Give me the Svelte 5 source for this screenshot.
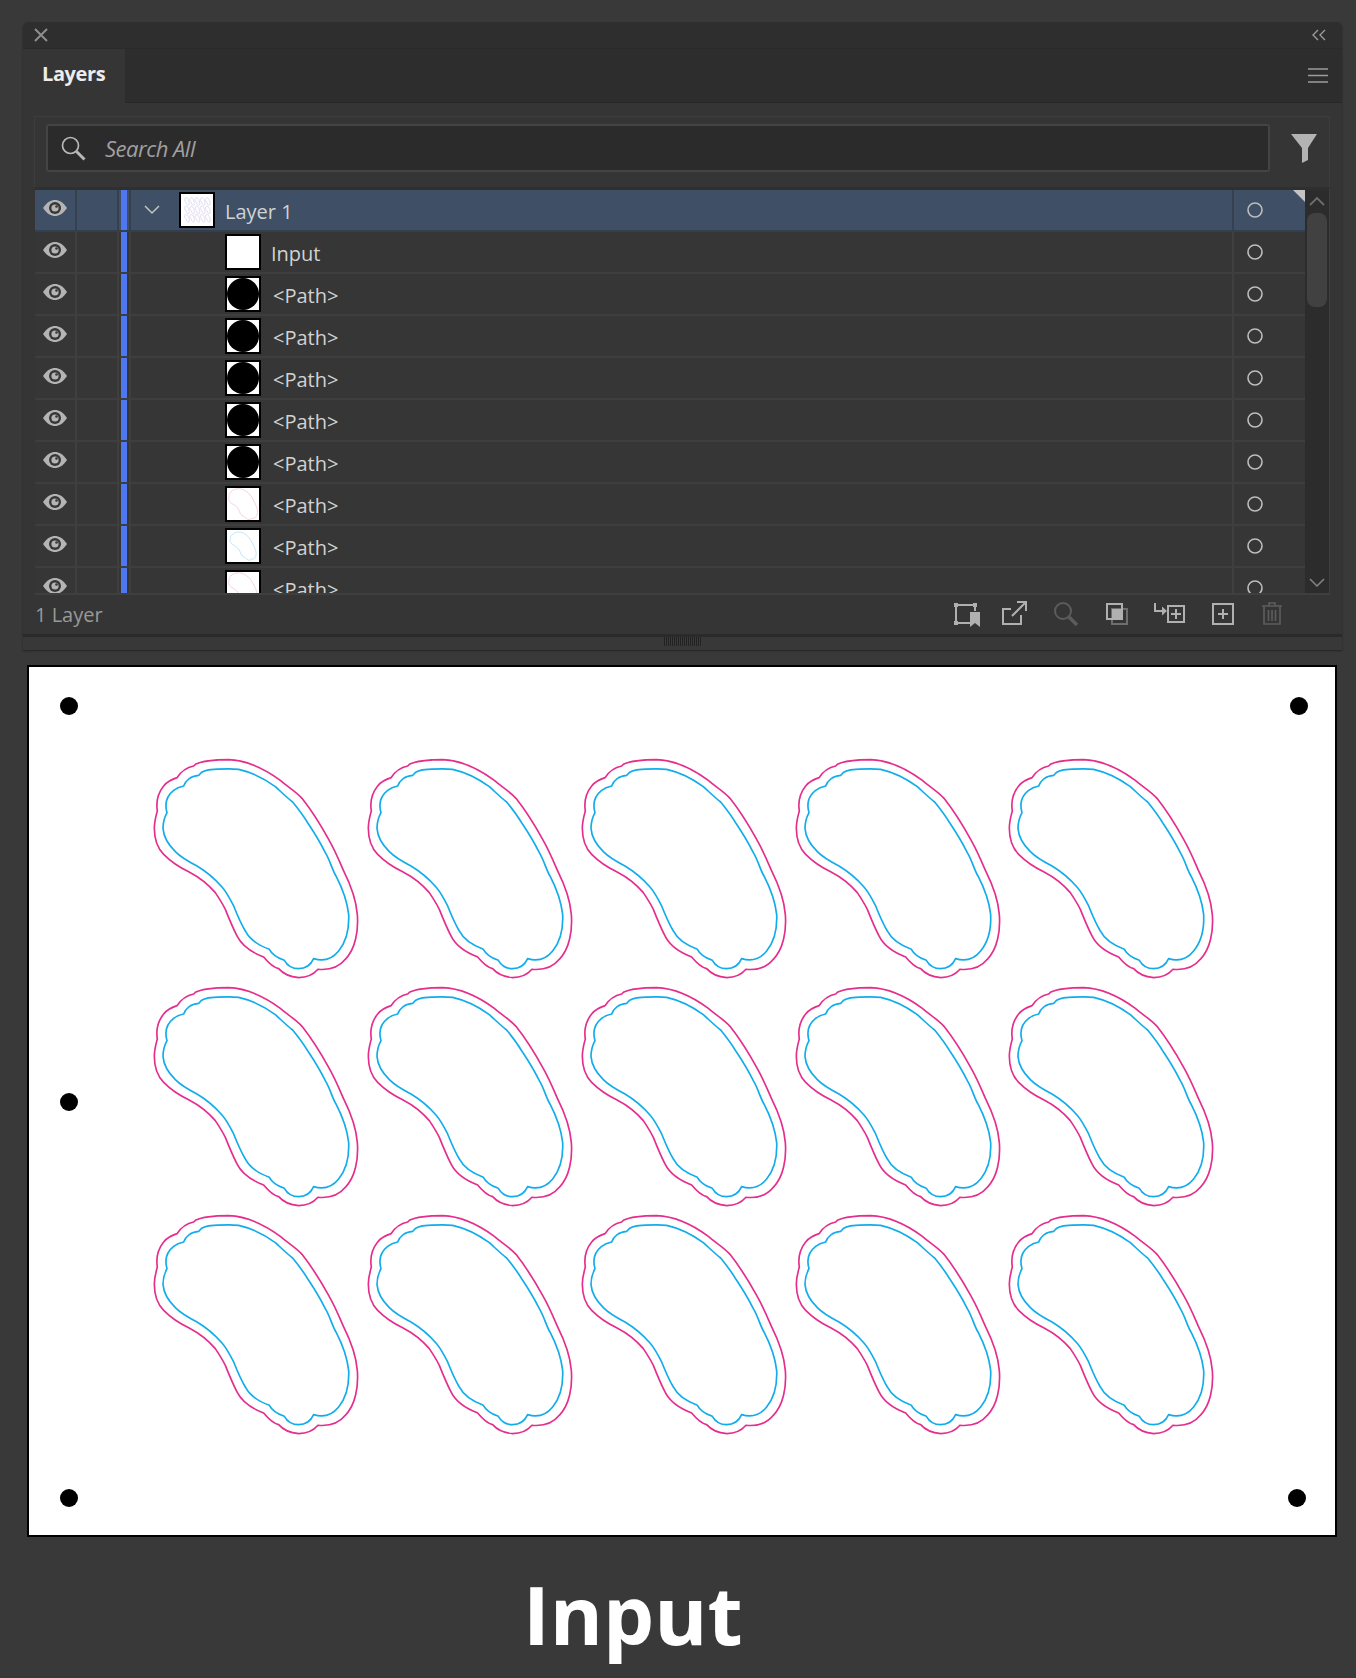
<script lang="ts">
	type Row = { label: string; thumb: 'white' | 'dot' | 'pink' | 'blue' };

	const pink =
		'M190 70C215 58 260 56 290 56C345 58 400 85 445 118C470 140 490 150 510 172C540 210 565 250 590 295C610 330 620 355 635 390C655 430 672 470 676 520C680 570 670 625 640 655C620 680 590 688 558 685C545 700 525 710 500 710C475 708 455 700 440 683C420 678 405 660 395 648C360 635 330 615 315 585C300 555 290 530 280 505C270 485 260 470 250 455C225 425 195 405 170 392C140 378 115 360 95 340C75 320 67 295 67 262C67 240 72 225 76 210C72 185 75 160 95 135C105 122 120 115 135 110C145 95 160 80 185 75Z';
	const blue =
		'M203 100C210 88 225 86 245 85C270 84 295 82 320 85C365 95 400 115 430 137C450 155 465 170 482 183C500 205 515 225 530 250C550 280 565 305 580 335C595 360 600 385 612 405C630 440 645 475 650 520C652 560 645 600 620 630C600 655 575 662 545 653C535 675 520 683 500 683C480 683 465 672 457 658C440 652 420 640 412 625C385 615 355 600 340 570C325 545 315 520 305 495C295 475 285 455 270 438C250 415 220 390 195 375C170 362 150 352 130 332C110 312 95 290 93 262C93 240 98 228 105 215C98 190 103 165 125 148C135 140 145 137 155 135C160 120 175 105 200 103Z';

	const rows: Row[] = [
		{ label: 'Input', thumb: 'white' },
		{ label: '<Path>', thumb: 'dot' },
		{ label: '<Path>', thumb: 'dot' },
		{ label: '<Path>', thumb: 'dot' },
		{ label: '<Path>', thumb: 'dot' },
		{ label: '<Path>', thumb: 'dot' },
		{ label: '<Path>', thumb: 'pink' },
		{ label: '<Path>', thumb: 'blue' },
		{ label: '<Path>', thumb: 'pink' }
	];

	const cols = [0, 214, 428, 642, 855];
	const lines = [0, 228, 456];
	const marks = [
		[40, 39],
		[1270, 39],
		[40, 435],
		[40, 831],
		[1268, 831]
	];
</script>

{#snippet eye()}
	<svg class="eye" width="26" height="18" viewBox="0 0 26 18">
		<path d="M1 9C5 3 9 1 13 1s8 2 12 8c-4 6-8 8-12 8S5 15 1 9Z" fill="#b4b4b4" />
		<circle cx="13" cy="9" r="6" fill="#363636" />
		<circle cx="13" cy="9" r="3.6" fill="#b4b4b4" />
		<circle cx="14.5" cy="7.5" r="1.3" fill="#363636" />
	</svg>
{/snippet}

{#snippet target()}
	<svg class="target" width="18" height="18" viewBox="0 0 18 18">
		<circle cx="9" cy="9" r="7" fill="none" stroke="#bdbdbd" stroke-width="1.6" />
	</svg>
{/snippet}

<main class="page">
	<section class="panel">
		<header class="titlebar">
			<svg width="14" height="14" viewBox="0 0 14 14">
				<path d="M1 1l12 12M13 1L1 13" stroke="#8e8e8e" stroke-width="2" />
			</svg>
			<svg width="14" height="12" viewBox="0 0 14 12">
				<path d="M6 1L1 6l5 5M13 1L8 6l5 5" fill="none" stroke="#9a9a9a" stroke-width="1.4" />
			</svg>
		</header>

		<div class="tabbar">
			<div class="tab">Layers</div>
			<svg width="20" height="15" viewBox="0 0 20 15">
				<path d="M0 1h20M0 7.500h20M0 14h20" stroke="#9c9c9c" stroke-width="1.500" />
			</svg>
		</div>

		<div class="searchbar">
			<div class="searchbox">
				<svg width="26" height="26" viewBox="0 0 26 26">
					<circle cx="10.500" cy="10.500" r="8" fill="none" stroke="#b8b8b8" stroke-width="1.700" />
					<path d="M16.500 16.500l8 8" stroke="#b8b8b8" stroke-width="3" />
				</svg>
				<span>Search All</span>
			</div>
			<svg class="filter" width="28" height="30" viewBox="0 0 28 30">
				<path d="M1 1h26L18 15v12l-6 3V15Z" fill="#b3b3b3" />
			</svg>
		</div>

		<div class="list">
			<div class="rows">
				<div class="row selected">
					<div class="cell">{@render eye()}</div>
					<div class="cell"></div>
					<div class="cell bar"><i></i></div>
					<div class="cell name">
						<svg class="chevron" width="16" height="10" viewBox="0 0 16 10">
							<path d="M1 1l7 7 7-7" fill="none" stroke="#c4c4c4" stroke-width="1.500" />
						</svg>
						<div class="thumb">
							<svg width="32" height="32" viewBox="0 0 1310 872" preserveAspectRatio="none">
								{#each lines as dy}
									{#each cols as dx}
										<g transform="translate({dx + 120} {dy + 80}) scale(0.333)">
											<path d={pink} fill="none" stroke="#e9a7d2" stroke-width="22" />
											<path d={blue} fill="none" stroke="#8fb2ea" stroke-width="22" />
										</g>
									{/each}
								{/each}
							</svg>
						</div>
						<span class="label top">Layer 1</span>
					</div>
					<div class="cell end">{@render target()}</div>
					<b class="corner"></b>
				</div>

				{#each rows as row}
					<div class="row">
						<div class="cell">{@render eye()}</div>
						<div class="cell"></div>
						<div class="cell bar"><i></i></div>
						<div class="cell name child">
							<div class="thumb">
								{#if row.thumb === 'dot'}
									<svg width="32" height="32" viewBox="0 0 32 32">
										<circle cx="16" cy="16" r="16" fill="#000" />
									</svg>
								{:else if row.thumb !== 'white'}
									<svg width="32" height="32" viewBox="50 40 640 680">
										<path
											d={row.thumb === 'pink' ? pink : blue}
											fill="none"
											stroke={row.thumb === 'pink' ? '#f3bedd' : '#a9e0f3'}
											stroke-width="16"
										/>
									</svg>
								{/if}
							</div>
							<span class="label" class:path={row.thumb !== 'white'}>{row.label}</span>
						</div>
						<div class="cell end">{@render target()}</div>
					</div>
				{/each}
			</div>

			<div class="scroller">
				<svg width="18" height="10" viewBox="0 0 18 10">
					<path d="M2 9l7-7 7 7" fill="none" stroke="#6d6d6d" stroke-width="1.800" />
				</svg>
				<div class="thumbbar"></div>
				<svg class="down" width="18" height="10" viewBox="0 0 18 10">
					<path d="M2 1l7 7 7-7" fill="none" stroke="#858585" stroke-width="1.500" />
				</svg>
			</div>
		</div>

		<footer class="status">
			<span>1 Layer</span>
			<div class="tools">
				<svg width="46" height="30" viewBox="0 0 46 30">
					<path d="M6 6h19M6 6v18M6 24h14M25 6v6" fill="none" stroke="#b0b0b0" stroke-width="2" />
					<path d="M4 4h4v4H4zM23 4h4v4h-4zM4 22h4v4H4z" fill="#b0b0b0" />
					<path d="M20 13h10v15l-5-4-5 4z" fill="#b0b0b0" />
				</svg>
				<svg width="50" height="30" viewBox="0 0 50 30">
					<path d="M15 10H7v15h18v-9" fill="none" stroke="#b0b0b0" stroke-width="2" />
					<path d="M16 17L29 4M21 3h9v9" fill="none" stroke="#b0b0b0" stroke-width="2" />
				</svg>
				<svg width="54" height="30" viewBox="0 0 54 30">
					<circle cx="17" cy="12" r="8" fill="none" stroke="#5c5c5c" stroke-width="2" />
					<path d="M23 18l8 8" stroke="#5c5c5c" stroke-width="3.500" />
				</svg>
				<svg width="50" height="30" viewBox="0 0 50 30">
					<rect x="12" y="10" width="15" height="15" fill="none" stroke="#6e6e6e" stroke-width="2" />
					<rect x="7" y="5" width="15" height="15" fill="none" stroke="#b0b0b0" stroke-width="2" />
					<rect x="12" y="10" width="10" height="10" fill="#b0b0b0" />
				</svg>
				<svg width="56" height="30" viewBox="0 0 56 30">
					<path d="M5 4v8h8" fill="none" stroke="#b0b0b0" stroke-width="2" />
					<path d="M12 7.500l5 4.500-5 4.500z" fill="#b0b0b0" />
					<rect x="18" y="7" width="16" height="16" fill="none" stroke="#b0b0b0" stroke-width="2" />
					<path d="M26 10v10M21 15h10" stroke="#b0b0b0" stroke-width="2" />
				</svg>
				<svg width="50" height="30" viewBox="0 0 50 30">
					<rect x="7" y="5" width="20" height="20" fill="none" stroke="#b0b0b0" stroke-width="2" />
					<path d="M17 10v10M12 15h10" stroke="#b0b0b0" stroke-width="2" />
				</svg>
				<svg width="34" height="30" viewBox="0 0 34 30">
					<path d="M6 7h20M13 7V4h6v3M8 7v18h16V7M12.500 11v11M16 11v11M19.500 11v11" fill="none" stroke="#5c5c5c" stroke-width="1.700" />
				</svg>
			</div>
		</footer>
		<div class="splitter"><div class="grip"></div></div>
	</section>

	<svg class="artboard" width="1306" height="868" viewBox="0 0 1306 868">
		{#each marks as [x, y]}
			<circle cx={x} cy={y} r="9" fill="#000" />
		{/each}
		{#each lines as dy}
			{#each cols as dx}
				<g transform="translate({dx + 103} {dy + 74}) scale(0.3333)">
					<path d={pink} fill="none" stroke="#e52d8c" stroke-width="5" />
					<path d={blue} fill="none" stroke="#11acec" stroke-width="5" />
				</g>
			{/each}
		{/each}
	</svg>

	<h1>Input</h1>
</main>

<style>
	:global(body) {
		background: #393939;
	}
	.page {
		height: 1678px;
		padding-top: 22px;
		box-sizing: border-box;
		overflow: hidden;
		font-family: 'Open Sans', sans-serif;
	}
	.panel {
		width: 1319px;
		height: 628px;
		margin-left: 23px;
		background: #353535;
		border-radius: 6px 6px 0 0;
		box-shadow: 0 1px 2px #222;
		display: flex;
		flex-direction: column;
		overflow: hidden;
	}
	.titlebar {
		height: 27px;
		flex: none;
		background: #2e2e2e;
		display: flex;
		align-items: center;
		justify-content: space-between;
		padding: 0 16px 0 11px;
		box-sizing: border-box;
		border-bottom: 1px solid #2a2a2a;
	}
	.tabbar {
		height: 54px;
		flex: none;
		background: #2d2d2d;
		border-bottom: 1px solid #282828;
		box-sizing: border-box;
		display: flex;
		align-items: center;
		justify-content: space-between;
		padding-right: 14px;
	}
	.tab {
		width: 102px;
		height: 54px;
		background: #353535;
		color: #ececec;
		font-size: 20px;
		font-weight: 700;
		line-height: 50px;
		padding-left: 19px;
		box-sizing: border-box;
		letter-spacing: -0.4px;
	}
	.searchbar {
		margin: 13px 12px 0 11px;
		height: 71px;
		flex: none;
		border-top: 1px solid #3d3d3d;
		border-left: 1px solid #3d3d3d;
		border-right: 1px solid #3d3d3d;
		box-sizing: border-box;
		display: flex;
		align-items: flex-start;
		padding: 7px 11px 0 11px;
	}
	.searchbox {
		width: 1225px;
		height: 48px;
		box-sizing: border-box;
		background: #2b2b2b;
		border: 2px solid #444;
		border-radius: 3px;
		display: flex;
		align-items: center;
		padding-left: 12px;
		gap: 19px;
		color: #a0a0a0;
		font-size: 22px;
		font-style: italic;
		letter-spacing: -0.5px;
	}
	.filter {
		margin: 9px 0 0 20px;
	}
	.list {
		margin: 0 12px 0 12px;
		height: 408px;
		flex: none;
		display: flex;
		overflow: hidden;
		border-top: 3px solid #2f2f2f;
		border-bottom: 2px solid #3f3f3f;
		border-right: 1px solid #3f3f3f;
		box-sizing: border-box;
	}
	.rows {
		flex: 1;
		min-width: 0;
	}
	.row {
		height: 42px;
		display: grid;
		grid-template-columns: 42px 42px 12px 1fr 71px;
		box-sizing: border-box;
		background: #363636;
		border-bottom: 2px solid #3e3e3e;
		position: relative;
	}
	.row.selected {
		background: #3e4f66;
		border-bottom-color: #333f4f;
	}
	.cell {
		display: flex;
		align-items: center;
		justify-content: center;
		box-sizing: border-box;
		border-right: 2px solid #3f3f3f;
		min-width: 0;
	}
	.selected .cell {
		border-right-color: #35414f;
	}
	.cell:last-of-type {
		border-right: 0;
	}
	.bar {
		align-items: stretch;
		padding: 0 2px 0 2px;
	}
	.bar i {
		display: block;
		width: 6px;
		background: #4f78f0;
	}
	.eye {
		margin-bottom: 4px;
	}
	.end {
		justify-content: flex-start;
		padding-left: 12px;
	}
	.name {
		justify-content: flex-start;
		padding-left: 13px;
	}
	.name.child {
		padding-left: 94px;
	}
	.chevron {
		margin-right: 19px;
	}
	.thumb {
		width: 36px;
		height: 36px;
		flex: none;
		box-sizing: border-box;
		border: 2px solid #000;
		background: #fff;
	}
	.thumb svg {
		display: block;
	}
	.label {
		margin-left: 10px;
		color: #d2d2d2;
		font-size: 20px;
		line-height: 36px;
		padding-top: 3px;
	}
	.label.path {
		margin-left: 12px;
	}
	.corner {
		position: absolute;
		top: 0;
		right: 0;
		border-top: 12px solid #c4c4c4;
		border-left: 12px solid transparent;
	}
	.scroller {
		width: 24px;
		flex: none;
		background: #2c2c2c;
		display: flex;
		flex-direction: column;
		align-items: center;
		padding-top: 6px;
		box-sizing: border-box;
	}
	.thumbbar {
		width: 20px;
		height: 94px;
		margin-top: 7px;
		border-radius: 8px;
		background: #414141;
	}
	.down {
		margin-top: auto;
		margin-bottom: 5px;
	}
	.status {
		height: 39px;
		flex: none;
		display: flex;
		align-items: center;
		justify-content: space-between;
		color: #999;
		font-size: 20px;
		padding-left: 12px;
	}
	.tools {
		display: flex;
		margin-right: 52px;
		margin-top: -1px;
	}
	.splitter {
		flex: 1;
		border-top: 3px solid #2a2a2a;
		background: #383838;
		display: flex;
		justify-content: center;
	}
	.grip {
		width: 38px;
		height: 9px;
		background: repeating-linear-gradient(90deg, #222 0 1px, #3a3a3a 1px 2px);
	}
	.artboard {
		display: block;
		margin: 15px 0 0 27px;
		background: #fff;
		border: 2px solid #000;
	}
	h1 {
		margin: 28px 0 0 523px;
		color: #fff;
		font-size: 81px;
		font-weight: 700;
		line-height: 1.2;
	}
</style>
